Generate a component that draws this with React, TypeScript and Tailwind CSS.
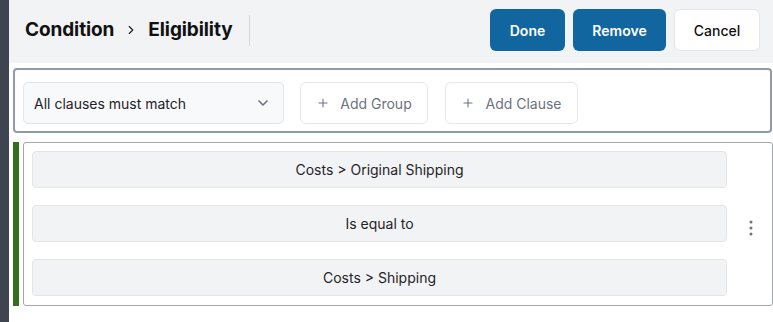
import React from "react";
import { ChevronDown, ChevronRight, Plus } from "lucide-react";

function KebabIcon() {
  return (
    <svg width="4" height="16" viewBox="0 0 4 16" className="text-[#6b7280]">
      <circle cx="2" cy="2" r="1.5" fill="currentColor" />
      <circle cx="2" cy="8" r="1.5" fill="currentColor" />
      <circle cx="2" cy="14" r="1.5" fill="currentColor" />
    </svg>
  );
}

const rows = ["Costs > Original Shipping", "Is equal to", "Costs > Shipping"];

export default function App() {
  return (
    <div className="flex w-[773px] h-[322px] overflow-hidden bg-white font-['Inter',sans-serif]">
      <div className="w-[9px] shrink-0 bg-[#3e4551]" />
      <div className="flex-1 flex flex-col">
        <header className="h-[63px] shrink-0 bg-[#f2f3f5] flex items-center pl-[16px] pr-[13px] pb-[3px]">
          <div className="flex items-center text-[19px] font-bold text-[#111] tracking-[-0.1px]">
            <span>Condition</span>
            <ChevronRight size={14} strokeWidth={2} className="mx-[10px] text-[#222]" />
            <span>Eligibility</span>
          </div>
          <div className="ml-[16px] w-px h-[31px] bg-[#d4d6da]" />
          <div className="ml-auto flex items-center gap-2">
            <button className="h-[42px] w-[75px] rounded-[6px] bg-[#1166a0] text-white text-[14px] font-semibold">
              Done
            </button>
            <button className="h-[42px] w-[93px] rounded-[6px] bg-[#1166a0] text-white text-[14px] font-semibold">
              Remove
            </button>
            <button className="h-[42px] w-[86px] rounded-[6px] bg-white border border-[#e3e5e8] text-[#111] text-[14px] font-medium">
              Cancel
            </button>
          </div>
        </header>

        <div className="mt-[5px] ml-[4px] mr-[1px] h-[65px] border-2 border-[#8f9aad] rounded-[4px] flex items-start pt-[12px] px-[8px]">
          <div className="w-[261px] h-[42px] rounded-[5px] border border-[#e2e4e8] bg-[#f8f9fa] flex items-center justify-between pl-[10px] pr-[12px] text-[14px] text-[#1f2328]">
            <span>All clauses must match</span>
            <ChevronDown size={16} strokeWidth={2.5} className="text-[#6b7280]" />
          </div>
          <button className="ml-[16px] w-[128px] h-[42px] rounded-[6px] border border-[#e5e7eb] bg-white flex items-center justify-center gap-[10px] text-[14px] text-[#6b7280]">
            <Plus size={14} strokeWidth={1.8} />
            <span>Add Group</span>
          </button>
          <button className="ml-[17px] w-[133px] h-[42px] rounded-[6px] border border-[#e5e7eb] bg-white flex items-center justify-center gap-[10px] text-[14px] text-[#6b7280]">
            <Plus size={14} strokeWidth={1.8} />
            <span>Add Clause</span>
          </button>
        </div>

        <div className="mt-[9px] ml-[4px] flex h-[164px]">
          <div className="w-[6px] bg-[#356e21]" />
          <div className="ml-[4px] flex-1 border border-[#a1a5ad] rounded-[3px] flex items-start pt-[8px]">
            <div className="w-[695px] ml-[8px] flex flex-col gap-[17px]">
              {rows.map((r) => (
                <div
                  key={r}
                  className="h-[37px] rounded-[4px] border border-[#e3e5e8] bg-[#f2f3f5] flex items-center justify-center text-[14px] text-[#1f2328]"
                >
                  {r}
                </div>
              ))}
            </div>
            <div className="flex-1 self-center flex justify-center pl-[2px]">
              <KebabIcon />
            </div>
          </div>
        </div>
      </div>
    </div>
  );
}
